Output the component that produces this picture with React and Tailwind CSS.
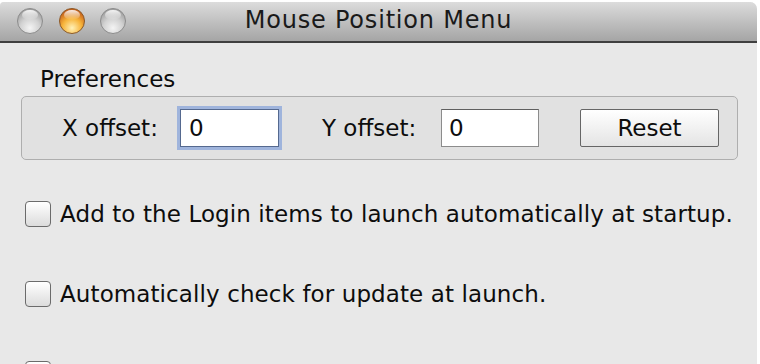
import React from "react";

const font = { fontFamily: '"DejaVu Sans", "Liberation Sans", sans-serif' };

function Light({ color }) {
  const id = "g" + color;
  const stops =
    color === "orange"
      ? ["#fff1b8", "#f7b43a", "#c8621a"]
      : ["#f4f4f4", "#d2d2d2", "#a2a2a2"];
  return (
    <svg width="28" height="28" viewBox="0 0 28 28">
      <defs>
        <radialGradient id={id} cx="50%" cy="78%" r="70%">
          <stop offset="0%" stopColor={stops[0]} />
          <stop offset="55%" stopColor={stops[1]} />
          <stop offset="100%" stopColor={stops[2]} />
        </radialGradient>
        <linearGradient id={id + "h"} x1="0" y1="0" x2="0" y2="1">
          <stop offset="0%" stopColor="#ffffff" stopOpacity="0.9" />
          <stop offset="100%" stopColor="#ffffff" stopOpacity="0" />
        </linearGradient>
      </defs>
      <circle cx="14" cy="14" r="12.5" fill={`url(#${id})`} stroke={color === "orange" ? "#8a5a2a" : "#8c8c8c"} strokeWidth="1" />
      <ellipse cx="14" cy="8" rx="8" ry="5" fill={`url(#${id}h)`} />
    </svg>
  );
}

function CheckRow({ label }) {
  return (
    <label className="flex items-center ml-[25px] shrink-0">
      <span className="w-[26px] h-[26px] rounded-[4px] border border-[#6b6b6b] bg-gradient-to-b from-white to-[#dcdcdc] shrink-0" />
      <span className="ml-[9px] text-[23px] leading-[26px] tracking-[0.1px] text-[#0d0d0d] whitespace-nowrap">{label}</span>
    </label>
  );
}

export default function App() {
  return (
    <div className="w-[760px] h-[364px] bg-white overflow-hidden" style={font}>
      <div className="w-[757px] h-[362px] mt-[2px] rounded-tl-[4px] rounded-tr-[7px] overflow-hidden bg-[#e8e8e8] flex flex-col">
        {/* title bar */}
        <div className="h-[41px] shrink-0 bg-gradient-to-b from-[#dcdcdc] to-[#a5a5a5] border-b-2 border-[#3f3f3f] flex items-center relative">
          <div className="flex items-center gap-[13.5px] ml-[16px] mt-[-1px]">
            <Light color="gray" />
            <Light color="orange" />
            <Light color="gray" />
          </div>
          <div className="absolute inset-0 flex items-center justify-center text-[24px] tracking-[0.8px] text-[#1a1a1a] pb-[3px]">
            Mouse Position Menu
          </div>
        </div>

        {/* preferences */}
        <div className="shrink-0 ml-[40px] mt-[23px] text-[23px] leading-[26px] text-[#0d0d0d]">Preferences</div>
        <div className="shrink-0 ml-[21px] mt-[4px] w-[717px] h-[64px] border border-[#aeaeae] rounded-[5px] bg-[#e1e1e1] flex items-center text-[23px] text-[#0d0d0d]">
          <span className="ml-[40px] w-[118px]">X offset:</span>
          <div className="w-[99px] h-[38px] bg-white border border-[#55698f] shadow-[0_0_0_3px_#9fb4dc] flex items-center pl-[8px]">0</div>
          <span className="ml-[43px] w-[119px]">Y offset:</span>
          <div className="w-[98px] h-[38px] bg-white border border-[#8c8c8c] border-t-[#5f5f5f] flex items-center pl-[7px]">0</div>
          <button className="ml-[41px] w-[139px] h-[38px] border-[1.5px] border-[#666] rounded-[2px] bg-gradient-to-b from-white to-[#e4e4e4] text-[23px] text-[#0d0d0d]">
            Reset
          </button>
        </div>

        {/* options */}
        <div className="shrink-0 mt-[41px] flex flex-col gap-[54px]">
          <CheckRow label="Add to the Login items to launch automatically at startup." />
          <CheckRow label="Automatically check for update at launch." />
          <CheckRow label="Show the cursor position in the menu bar." />
        </div>
      </div>
    </div>
  );
}
